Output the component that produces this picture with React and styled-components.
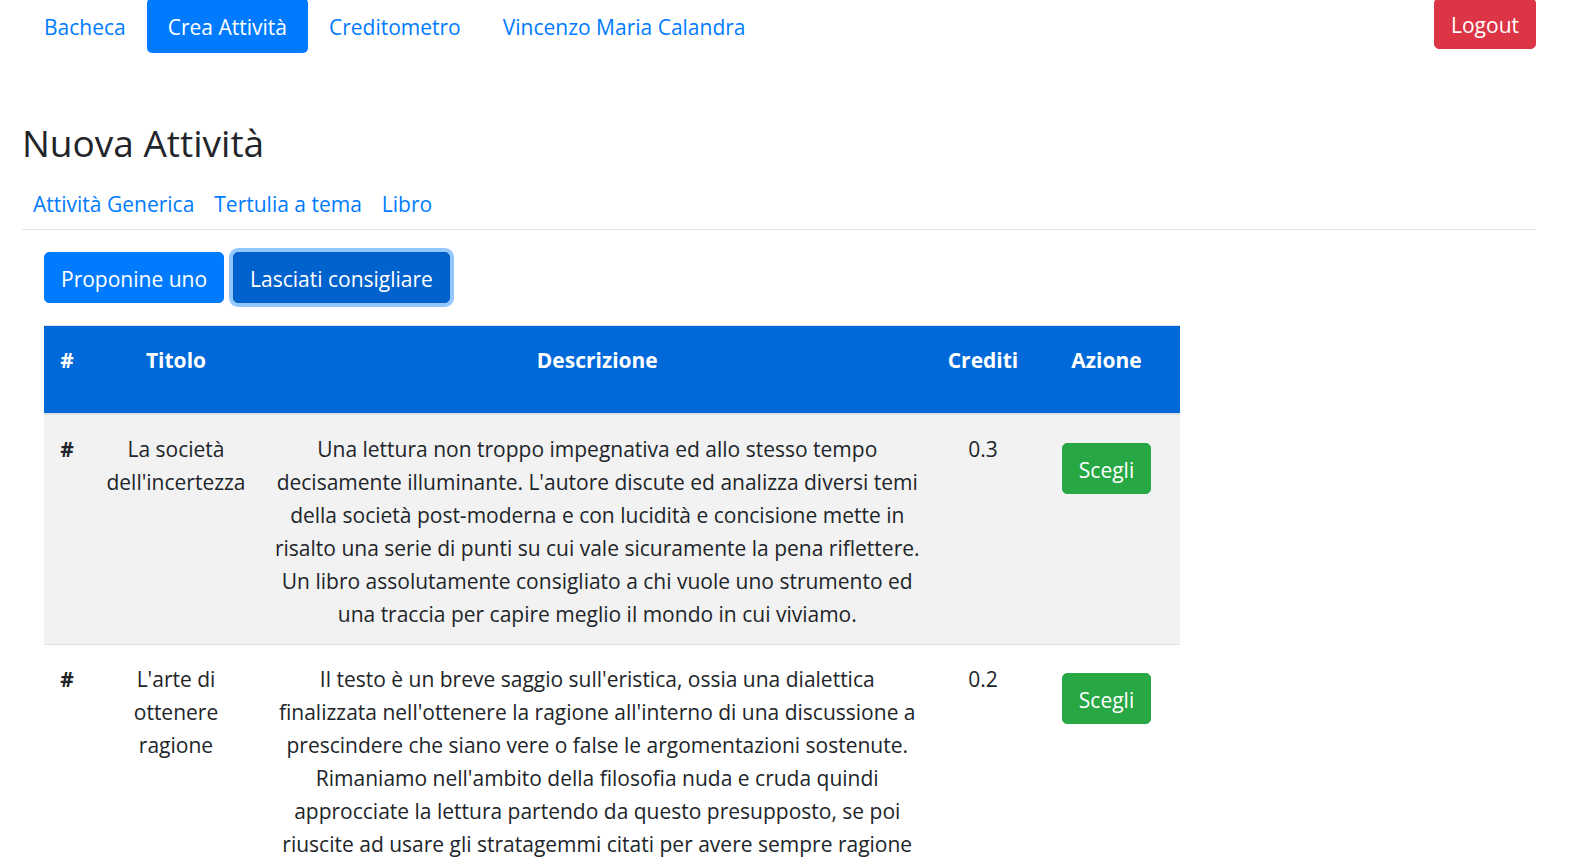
import React from "react";
import styled, { createGlobalStyle, css } from "styled-components";

const GlobalStyle = createGlobalStyle`
  *, *::before, *::after { box-sizing: border-box; }
  body {
    margin: 0;
    background: #fff;
    color: #212529;
    font-family: "Segoe UI", "Open Sans", "Noto Sans", sans-serif;
    font-size: 21px;
    line-height: 33px;
  }
`;

const Page = styled.div`
  display: flow-root;
  padding: 0 42px 0 22px;
`;

const Header = styled.header`
  display: flex;
  justify-content: space-between;
  align-items: flex-start;
  margin: -2px 0 65px;
`;

const Nav = styled.nav`
  display: flex;
  padding-left: 1px;
`;

const NavLink = styled.a`
  padding: 13px 21px 9px;
  border-radius: 5px;
  text-decoration: none;
  color: ${(p) => (p.$active ? "#fff" : "#007bff")};
  background: ${(p) => (p.$active ? "#007bff" : "transparent")};
`;

const colors = {
  primary: "#007bff",
  danger: "#dc3545",
  success: "#28a745",
};

const Button = styled.button`
  padding: 10px 16px 6px;
  border: 1px solid ${(p) => colors[p.$variant]};
  border-radius: 5px;
  background: ${(p) => colors[p.$variant]};
  color: #fff;
  font: inherit;
  white-space: nowrap;
  cursor: pointer;
  ${(p) =>
    p.$pressed &&
    css`
      background: #0062cc;
      border-color: #005cbf;
      box-shadow: 0 0 0 4px rgba(38, 143, 255, 0.5);
    `}
`;

const Title = styled.h3`
  margin: 0 0 10px;
  padding-top: 2px;
  font-size: 37px;
  font-weight: 400;
  line-height: 46px;
`;

const Tabs = styled.nav`
  display: flex;
  padding: 0 1px;
  border-bottom: 1px solid #dee2e6;
`;

const Tab = styled.a`
  padding: 12px 10px 8px;
  color: #007bff;
  text-decoration: none;
`;

const Panel = styled.section`
  padding-top: 22px;
`;

const Actions = styled.div`
  display: flex;
  gap: 9px;
  margin: 0 22px 22px;
`;

const Table = styled.table`
  width: 75%;
  margin-left: 22px;
  border-spacing: 0;
  table-layout: fixed;
  text-align: center;
`;

const HeadCell = styled.th`
  width: ${(p) => p.$width || "auto"};
  height: 90px;
  padding: 18px 0;
  border-top: 1px solid #dee2e6;
  border-bottom: 2px solid #dee2e6;
  background: #0069d9;
  color: #fff;
  font-weight: 700;
  vertical-align: top;
`;

const Row = styled.tr`
  background: #fff;
  &:nth-child(odd) { background: #f2f2f2; }
  & + & > * { border-top: 1px solid #dee2e6; }
`;

const Cell = styled.td`
  padding: 18px 12px 13px;
  font-weight: ${(p) => (p.$strong ? 700 : 400)};
  vertical-align: top;
`;

const ActionCell = styled(Cell)`
  padding-top: 28px;
`;

const columns = [
  { name: "#", width: "46px" },
  { name: "Titolo", width: "172px" },
  { name: "Descrizione" },
  { name: "Crediti", width: "101px" },
  { name: "Azione", width: "146px" },
];

const books = [
  {
    title: "La società dell'incertezza",
    description:
      "Una lettura non troppo impegnativa ed allo stesso tempo decisamente illuminante. L'autore discute ed analizza diversi temi della società post-moderna e con lucidità e concisione mette in risalto una serie di punti su cui vale sicuramente la pena riflettere. Un libro assolutamente consigliato a chi vuole uno strumento ed una traccia per capire meglio il mondo in cui viviamo.",
    credits: "0.3",
  },
  {
    title: "L'arte di ottenere ragione",
    description:
      "Il testo è un breve saggio sull'eristica, ossia una dialettica finalizzata nell'ottenere la ragione all'interno di una discussione a prescindere che siano vere o false le argomentazioni sostenute. Rimaniamo nell'ambito della filosofia nuda e cruda quindi approcciate la lettura partendo da questo presupposto, se poi riuscite ad usare gli stratagemmi citati per avere sempre ragione",
    credits: "0.2",
  },
];

export default function App() {
  return (
    <>
      <GlobalStyle />
      <Page>
        <Header>
          <Nav>
            <NavLink href="#bacheca">Bacheca</NavLink>
            <NavLink href="#crea" $active>Crea Attività</NavLink>
            <NavLink href="#creditometro">Creditometro</NavLink>
            <NavLink href="#profilo">Vincenzo Maria Calandra</NavLink>
          </Nav>
          <Button type="button" $variant="danger">Logout</Button>
        </Header>
        <main>
          <Title>Nuova Attività</Title>
          <Tabs>
            <Tab href="#generica">Attività Generica</Tab>
            <Tab href="#tertulia">Tertulia a tema</Tab>
            <Tab href="#libro">Libro</Tab>
          </Tabs>
          <Panel>
            <Actions>
              <Button type="button" $variant="primary">Proponine uno</Button>
              <Button type="button" $variant="primary" $pressed>Lasciati consigliare</Button>
            </Actions>
            <Table>
              <thead>
                <tr>
                  {columns.map((c) => (
                    <HeadCell key={c.name} scope="col" $width={c.width}>{c.name}</HeadCell>
                  ))}
                </tr>
              </thead>
              <tbody>
                {books.map((b) => (
                  <Row key={b.title}>
                    <Cell as="th" scope="row" $strong>#</Cell>
                    <Cell>{b.title}</Cell>
                    <Cell>{b.description}</Cell>
                    <Cell>{b.credits}</Cell>
                    <ActionCell>
                      <Button type="button" $variant="success">Scegli</Button>
                    </ActionCell>
                  </Row>
                ))}
              </tbody>
            </Table>
          </Panel>
        </main>
      </Page>
    </>
  );
}
